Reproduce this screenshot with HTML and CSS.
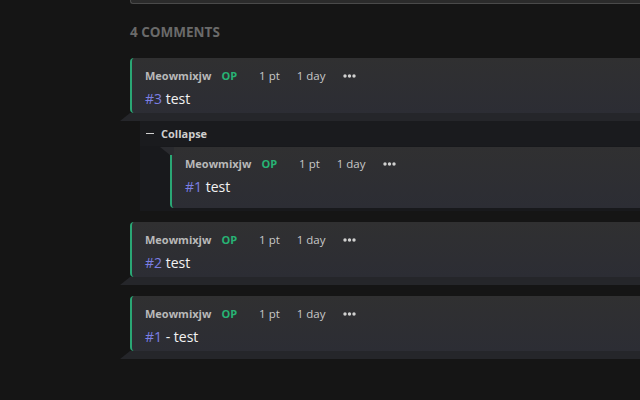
FILE: index.html
```html
<!DOCTYPE html>
<html>
<head>
<meta charset="utf-8">
<link rel="stylesheet" href="styles.css">
</head>
<body>
<div class="page">
  <div class="topbox"></div>
  <h2 class="count">4 COMMENTS</h2>

  <div class="comment">
    <div class="card">
      <div class="meta">
        <span class="name">Meowmixjw</span>
        <span class="op">OP</span>
        <span class="pts">1 pt</span>
        <span class="age">1 day</span>
        <span class="more"><svg width="13" height="4" viewBox="0 0 13 4"><circle cx="2" cy="2" r="1.7"/><circle cx="6.5" cy="2" r="1.7"/><circle cx="11" cy="2" r="1.7"/></svg></span>
      </div>
      <div class="body"><span class="num">#3</span> test</div>
    </div>
    <div class="thread">
      <div class="collapse"><span class="dash"></span><span>Collapse</span></div>
      <div class="card nested">
        <div class="meta">
          <span class="name">Meowmixjw</span>
          <span class="op">OP</span>
          <span class="pts">1 pt</span>
          <span class="age">1 day</span>
          <span class="more"><svg width="13" height="4" viewBox="0 0 13 4"><circle cx="2" cy="2" r="1.7"/><circle cx="6.5" cy="2" r="1.7"/><circle cx="11" cy="2" r="1.7"/></svg></span>
        </div>
        <div class="body"><span class="num">#1</span> test</div>
      </div>
    </div>
  </div>

  <div class="comment">
    <div class="card">
      <div class="meta">
        <span class="name">Meowmixjw</span>
        <span class="op">OP</span>
        <span class="pts">1 pt</span>
        <span class="age">1 day</span>
        <span class="more"><svg width="13" height="4" viewBox="0 0 13 4"><circle cx="2" cy="2" r="1.7"/><circle cx="6.5" cy="2" r="1.7"/><circle cx="11" cy="2" r="1.7"/></svg></span>
      </div>
      <div class="body"><span class="num">#2</span> test</div>
    </div>
  </div>

  <div class="comment">
    <div class="card">
      <div class="meta">
        <span class="name">Meowmixjw</span>
        <span class="op">OP</span>
        <span class="pts">1 pt</span>
        <span class="age">1 day</span>
        <span class="more"><svg width="13" height="4" viewBox="0 0 13 4"><circle cx="2" cy="2" r="1.7"/><circle cx="6.5" cy="2" r="1.7"/><circle cx="11" cy="2" r="1.7"/></svg></span>
      </div>
      <div class="body"><span class="num">#1</span> - test</div>
    </div>
  </div>
</div>
</body>
</html>
```

FILE: styles.css
```css
html, body {
  margin: 0;
  padding: 0;
  background: #151515;
  height: 100%;
  overflow: hidden;
}
body {
  font-family: "Open Sans", "DejaVu Sans", sans-serif;
  color: #e8e8e8;
}
.page {
  padding-left: 130px;
}
.topbox {
  height: 3px;
  background: #2b2b2b;
  border: 1px solid #4a4a4a;
  border-top: none;
  border-right: none;
  border-radius: 0 0 0 3px;
}
.count {
  margin: 0;
  padding-top: 19px;
  height: 35px;
  font-size: 13.5px;
  line-height: 18px;
  font-weight: 700;
  color: #6a6a6a;
}
.comment {
  display: flow-root;
  margin-bottom: 11px;
}
.card {
  position: relative;
  height: 55px;
  box-sizing: border-box;
  padding: 10px 0 0 13px;
  background: linear-gradient(#303031, #2c2d34);
  border-left: 2px solid #2aa775;
  border-radius: 4px 0 0 4px;
  margin-bottom: 8px;
}
.card::after {
  content: "";
  position: absolute;
  left: -12px;
  right: 0;
  top: 100%;
  height: 8px;
  background: #25262a;
  clip-path: polygon(10px 0, 100% 0, 100% 100%, 0 100%);
}
.meta {
  display: flex;
  align-items: center;
  height: 16px;
  font-size: 11.5px;
  line-height: 16px;
  color: #c8c8c8;
}
.name {
  font-size: 11px;
  font-weight: 700;
  color: #b9b9b9;
}
.op {
  font-size: 11px;
  font-weight: 700;
  color: #27b374;
  margin-left: 10px;
}
.pts {
  margin-left: 22px;
}
.age {
  margin-left: 17px;
}
.more {
  margin-left: 17px;
  display: flex;
  fill: #d0d0d0;
}
.body {
  margin-top: 5px;
  font-size: 14px;
  line-height: 20px;
  color: #f2f2f2;
}
.num {
  color: #7b7fe3;
}
.thread {
  margin-left: 10px;
  background: #18191c;
  padding-bottom: 3px;
  margin-top: -8px;
  padding-top: 8px;
}
.collapse {
  display: flex;
  align-items: center;
  height: 25px;
  padding-left: 6px;
  font-size: 11px;
  font-weight: 700;
  color: #cfcfcf;
  background: #1a1b1e;
}
.dash {
  width: 8px;
  height: 1px;
  background: #d0d0d0;
  margin-right: 7px;
}
.nested {
  margin-left: 30px;
  margin-top: 1px;
  height: 61px;
  padding-top: 9px;
  margin-bottom: 0;
}
.nested::after {
  display: none;
}
.nested::before {
  content: "";
  position: absolute;
  left: -12px;
  width: 14px;
  top: 0;
  height: 8px;
  background: #2a2b2f;
  clip-path: polygon(0 0, 100% 0, 100% 100%, 10px 100%);
}
```
